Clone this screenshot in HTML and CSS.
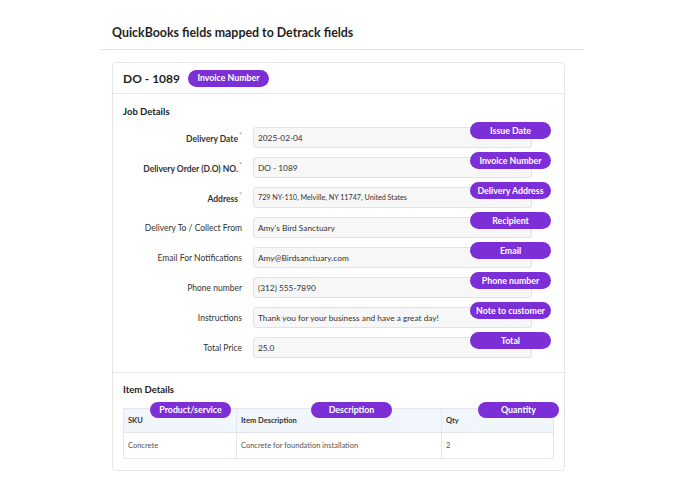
FILE: index.html
```html
<!DOCTYPE html>
<html lang="en">
<head>
    <meta charset="UTF-8">
    <meta name="viewport" content="width=device-width, initial-scale=1.0">
    <title>QuickBooks fields mapped to Detrack fields</title>
    <link rel="stylesheet" href="styles.css">
</head>
<body>

    <div class="page">
        <h1 class="page-title">QuickBooks fields mapped to Detrack fields</h1>

        <div class="card">
            <div class="card-head">
                <span class="order-no">DO - 1089</span>
                <span class="badge badge-inline">Invoice Number</span>
            </div>

            <!-- Job details -->
            <div class="section job">
                <h2 class="section-title">Job Details</h2>

                <div class="field">
                    <label class="field-label">Delivery Date<sup>*</sup></label>
                    <div class="field-input">2025-02-04<span class="badge">Issue Date</span></div>
                </div>
                <div class="field">
                    <label class="field-label">Delivery Order (D.O) NO.<sup>*</sup></label>
                    <div class="field-input">DO - 1089<span class="badge">Invoice Number</span></div>
                </div>
                <div class="field">
                    <label class="field-label">Address<sup>*</sup></label>
                    <div class="field-input small">729 NY-110, Melville, NY 11747, United States<span class="badge">Delivery Address</span></div>
                </div>
                <div class="field">
                    <label class="field-label light">Delivery To / Collect From</label>
                    <div class="field-input">Amy's Bird Sanctuary<span class="badge">Recipient</span></div>
                </div>
                <div class="field">
                    <label class="field-label light">Email For Notifications</label>
                    <div class="field-input">Amy@Birdsanctuary.com<span class="badge">Email</span></div>
                </div>
                <div class="field">
                    <label class="field-label light">Phone number</label>
                    <div class="field-input">(312) 555-7890<span class="badge">Phone number</span></div>
                </div>
                <div class="field">
                    <label class="field-label light">Instructions</label>
                    <div class="field-input">Thank you for your business and have a great day!<span class="badge">Note to customer</span></div>
                </div>
                <div class="field">
                    <label class="field-label light">Total Price</label>
                    <div class="field-input">25.0<span class="badge">Total</span></div>
                </div>
            </div>

            <!-- Item details -->
            <div class="section items">
                <h2 class="section-title">Item Details</h2>

                <div class="table-wrap">
                    <span class="badge badge-sku">Product/service</span>
                    <span class="badge badge-desc">Description</span>
                    <span class="badge badge-qty">Quantity</span>
                    <table class="item-table">
                        <thead>
                            <tr>
                                <th class="col-sku">SKU</th>
                                <th class="col-desc">Item Description</th>
                                <th>Qty</th>
                            </tr>
                        </thead>
                        <tbody>
                            <tr>
                                <td>Concrete</td>
                                <td>Concrete for foundation installation</td>
                                <td>2</td>
                            </tr>
                        </tbody>
                    </table>
                </div>
            </div>
        </div>
    </div>

</body>
</html>
```

FILE: styles.css
```css
body {
    margin: 0;
    background: #fff;
    font-family: Lato, "Open Sans", sans-serif;
    color: #2b2b2b;
}

.page {
    width: 484px;
    margin-left: 100px;
}

.page-title {
    margin: 0;
    padding: 25px 12px 9px;
    font-size: 12.4px;
    font-weight: 700;
    color: #1f1f1f;
    border-bottom: 1px solid #e4e4e4;
}

.card {
    width: 451px;
    margin: 12px 0 0 12px;
    border: 1px solid #e6e6e6;
    border-radius: 4px;
}

.card-head {
    display: flex;
    align-items: center;
    gap: 8px;
    height: 30px;
    padding: 0 10px;
    border-bottom: 1px solid #e6e6e6;
}

.order-no {
    font-size: 12px;
    font-weight: 700;
    color: #1f1f1f;
}

.section {
    padding: 0 10px;
}

.section-title {
    margin: 0;
    font-size: 9.5px;
    font-weight: 700;
    color: #222;
}

.job {
    padding-top: 12px;
    padding-bottom: 14px;
    border-bottom: 1px solid #e6e6e6;
}

.job .section-title {
    margin-bottom: 10px;
}

.field {
    display: grid;
    grid-template-columns: 119px 279px;
    column-gap: 11px;
    align-items: center;
    margin-bottom: 9px;
}

.field:last-child {
    margin-bottom: 0;
}

.field-label {
    text-align: right;
    font-size: 8.5px;
    font-weight: 700;
    color: #333;
}

.field-label.light {
    font-weight: 400;
}

.field-label sup {
    font-size: 7px;
    color: #a0a0a0;
    font-weight: 400;
    margin-left: 1px;
}

.field-input {
    position: relative;
    height: 21px;
    box-sizing: border-box;
    padding: 0 4px;
    display: flex;
    align-items: center;
    font-size: 8.3px;
    color: #333;
    background: #f7f7f7;
    border: 1px solid #e2e2e2;
    border-radius: 3px;
}

.field-input.small {
    font-size: 7.2px;
}

.badge {
    display: inline-flex;
    align-items: center;
    justify-content: center;
    width: 81px;
    height: 17px;
    padding-bottom: 1px;
    box-sizing: border-box;
    border-radius: 9px;
    background: #7c2fd6;
    color: #fff;
    font-size: 8.8px;
    font-weight: 700;
    white-space: nowrap;
}

.field-input .badge {
    position: absolute;
    left: 216px;
    top: -6px;
}

.items {
    padding-top: 11px;
    padding-bottom: 11px;
}

.items .section-title {
    margin-bottom: 13px;
}

.table-wrap {
    position: relative;
}

.table-wrap .badge {
    position: absolute;
    top: -6px;
    height: 16px;
}

.badge-sku { left: 27px; }
.badge-desc { left: 188px; }
.badge-qty { left: 355px; }

.item-table {
    width: 431px;
    border-collapse: collapse;
    font-size: 7.5px;
    color: #444;
}

.item-table th,
.item-table td {
    border: 1px solid #e3e6ee;
    text-align: left;
    padding: 0 4px;
    font-weight: 400;
}

.item-table th {
    height: 23px;
    background: #f1f5fc;
    font-weight: 700;
    color: #333;
}

.item-table td {
    height: 25px;
    color: #555;
}

.col-sku { width: 104px; }
.col-desc { width: 196px; }
```
